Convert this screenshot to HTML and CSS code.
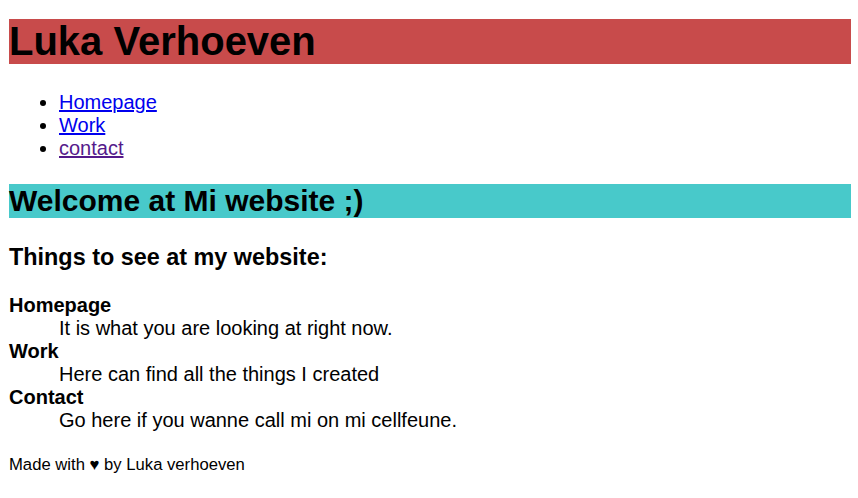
FILE: index.html
```html
<!DOCTYPE html>
<html lang="en">
<head>
<meta charset="utf-8">
<title>Luka Verhoeven</title>
<link rel="stylesheet" href="styles.css">
</head>
<body>
<header class="site-header">
  <h1 class="site-title">Luka Verhoeven</h1>
  <nav class="site-nav">
    <ul class="nav-list">
      <li><a class="nav-link" href="#">Homepage</a></li>
      <li><a class="nav-link" href="#">Work</a></li>
      <li><a class="nav-link nav-link-visited" href="#">contact</a></li>
    </ul>
  </nav>
</header>
<main class="content">
  <h2 class="welcome">Welcome at Mi website ;)</h2>
  <h3 class="section-title">Things to see at my website:</h3>
  <dl class="things">
    <dt>Homepage</dt>
    <dd>It is what you are looking at right now.</dd>
    <dt>Work</dt>
    <dd>Here can find all the things I created</dd>
    <dt>Contact</dt>
    <dd>Go here if you wanne call mi on mi cellfeune.</dd>
  </dl>
</main>
<footer class="site-footer">
  <p class="footer-text">Made with &#9829; by Luka verhoeven</p>
</footer>
</body>
</html>
```

FILE: styles.css
```css
html, body {
  background: #ffffff;
}
body {
  margin: 0;
  padding: 19px 7px 0 9px;
  font-family: "Liberation Sans", Arial, sans-serif;
  font-size: 20px;
  line-height: 23px;
  color: #000000;
}
.site-title {
  margin: 0 0 27px;
  font-size: 40px;
  line-height: 45px;
  font-weight: bold;
  background: #c84b4b;
}
.nav-list {
  margin: 0 0 24px;
  padding-left: 50px;
}
.nav-link {
  color: #0000ee;
}
.nav-link-visited {
  color: #551a8b;
}
.welcome {
  margin: 0 0 26px;
  font-size: 30px;
  line-height: 34px;
  background: #48c9ca;
}
.section-title {
  margin: 0 0 23px;
  font-size: 23.4px;
  line-height: 27px;
}
.things {
  margin: 0 0 23px;
}
.things dt {
  font-weight: bold;
}
.things dd {
  margin-left: 50px;
}
.footer-text {
  margin: 0;
  font-size: 16.67px;
  line-height: 19px;
}
```
